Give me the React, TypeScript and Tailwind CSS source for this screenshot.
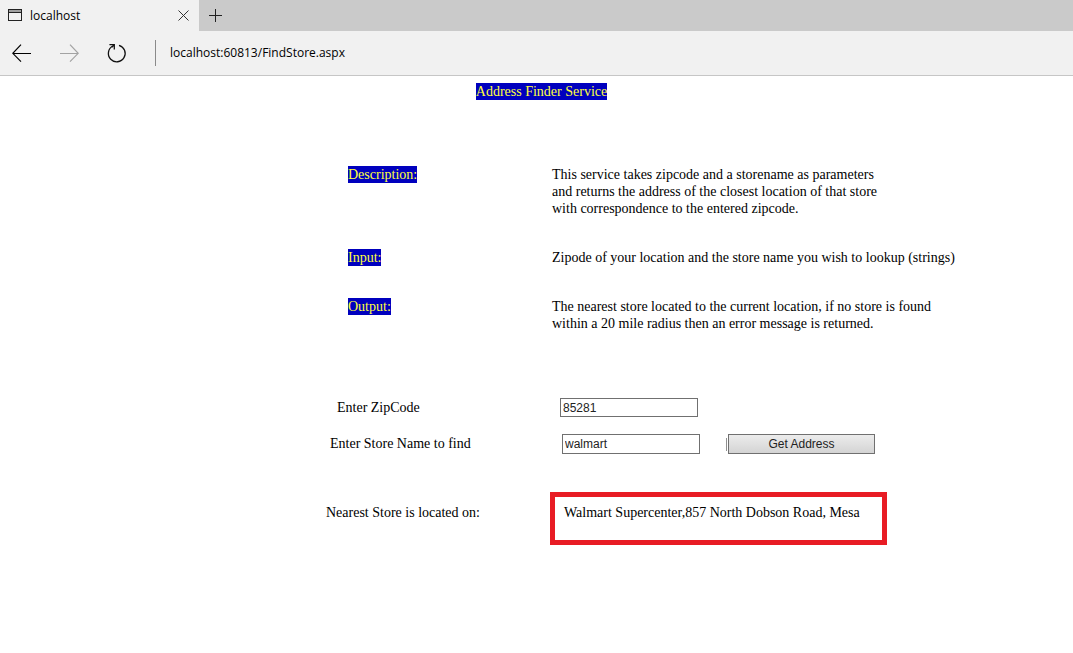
import { useState, type FormEvent, type ReactNode } from "react";

function Highlight({ children }: { children: ReactNode }) {
  return <span className="inline-block h-[17px] bg-[#0000be] text-[#ffff3c]">{children}</span>;
}

function BrowserChrome() {
  return (
    <header className="font-['Open_Sans',sans-serif] text-[12px] text-black">
      <div className="flex h-[31px] bg-[#cacaca]">
        <div className="flex w-[199px] items-center bg-[#f1f1f1] pr-[6px] pl-2">
          <svg width="14" height="13" viewBox="0 0 14 13" fill="none" shapeRendering="crispEdges" aria-hidden="true">
            <rect x="1" y="1" width="12" height="2" fill="#a0a0a0" />
            <path d="M0.5 0.5h13v11h-13zM0.5 3.5h13" stroke="#222" />
          </svg>
          <span className="grow pl-2">localhost</span>
          <button type="button" aria-label="Close tab" className="p-1">
            <svg width="11" height="11" viewBox="0 0 11 11" fill="none" stroke="#333" aria-hidden="true">
              <path d="M0.5 0.5l10 10M10.5 0.5l-10 10" />
            </svg>
          </button>
        </div>
        <button type="button" aria-label="New tab" className="px-[10px]">
          <svg width="13" height="13" viewBox="0 0 13 13" fill="none" stroke="#222" aria-hidden="true">
            <path d="M6.5 0v13M0 6.5h13" />
          </svg>
        </button>
      </div>
      <nav aria-label="Browser" className="flex h-[45px] items-center border-b border-[#c6c6c6] bg-[#f1f1f1] pl-3">
        <button type="button" aria-label="Back">
          <svg width="19" height="18" viewBox="0 0 19 18" fill="none" stroke="#000" strokeWidth="1.2" aria-hidden="true">
            <path d="M9 0.7L0.8 9.3L9 17.6M0.8 9.5H19" />
          </svg>
        </button>
        <button type="button" aria-label="Forward" className="ml-[29px]">
          <svg width="19" height="18" viewBox="0 0 19 18" fill="none" stroke="#a3a3a3" strokeWidth="1.2" aria-hidden="true">
            <path d="M10 0.7L18.2 9.3L10 17.6M18.2 9.5H0" />
          </svg>
        </button>
        <button type="button" aria-label="Refresh" className="ml-7">
          <svg width="20" height="20" viewBox="0 0 20 20" fill="none" stroke="#111" strokeWidth="1.3" aria-hidden="true">
            <path d="M12 2.3A8.4 8.4 0 1 1 5.8 3" />
            <path d="M2.4 1.6H7.3V6.6M7.3 1.6L4.8 4.2" />
          </svg>
        </button>
        <div className="ml-7 h-[26px] border-l border-[#8a8a8a]" />
        <span className="pl-[14px]">localhost:60813/FindStore.aspx</span>
      </nav>
    </header>
  );
}

export default function App() {
  const [zip, setZip] = useState("85281");
  const [store, setStore] = useState("walmart");
  const submit = (e: FormEvent) => e.preventDefault();

  return (
    <div className="min-h-screen bg-white">
      <BrowserChrome />
      <main className="pt-[7px] font-['Liberation_Serif',serif] text-[14px] leading-[17px] text-black">
        <h1 className="pl-[10px] text-center">
          <Highlight>Address Finder Service</Highlight>
        </h1>

        <dl className="grid grid-cols-[204px_1fr] gap-y-8 pt-[66px] pl-[348px]">
          <dt>
            <Highlight>Description:</Highlight>
          </dt>
          <dd>
            This service takes zipcode and a storename as parameters
            <br />
            and returns the address of the closest location of that store
            <br />
            with correspondence to the entered zipcode.
          </dd>
          <dt>
            <Highlight>Input:</Highlight>
          </dt>
          <dd>Zipode of your location and the store name you wish to lookup (strings)</dd>
          <dt>
            <Highlight>Output:</Highlight>
          </dt>
          <dd>
            The nearest store located to the current location, if no store is found
            <br />
            within a 20 mile radius then an error message is returned.
          </dd>
        </dl>

        <form onSubmit={submit} className="pt-[66px] pl-[326px]">
          <div className="flex items-start">
            <label htmlFor="zip" className="w-[234px] pl-[11px] leading-[19px]">
              Enter ZipCode
            </label>
            <input
              id="zip"
              value={zip}
              onChange={(e) => setZip(e.target.value)}
              className="h-[19px] w-[138px] border border-[#707070] px-[2px] font-['Liberation_Sans',sans-serif] text-[12px] text-[#222]"
            />
          </div>
          <div className="flex items-start pt-[17px]">
            <label htmlFor="store" className="w-[236px] pl-1 leading-[19px]">
              Enter Store Name to find
            </label>
            <input
              id="store"
              value={store}
              onChange={(e) => setStore(e.target.value)}
              className="h-5 w-[138px] border border-[#707070] px-[2px] font-['Liberation_Sans',sans-serif] text-[12px] text-[#222]"
            />
            <div className="ml-[26px] w-[2px] pt-1">
              <div className="h-[13px] w-px bg-[#909090]" />
            </div>
            <button
              type="submit"
              className="h-5 w-[147px] border border-[#707070] bg-linear-to-b from-[#ececec] to-[#d4d4d4] font-['Liberation_Sans',sans-serif] text-[12px] leading-[18px] text-[#222]"
            >
              Get Address
            </button>
          </div>
          <div className="flex pt-[38px]">
            <span className="w-[224px] pt-3">Nearest Store is located on:</span>
            <output htmlFor="zip store" className="h-[53px] w-[337px] border-5 border-[#e81c24] pt-[7px] pl-[9px]">
              Walmart Supercenter,857 North Dobson Road, Mesa
            </output>
          </div>
        </form>
      </main>
    </div>
  );
}
